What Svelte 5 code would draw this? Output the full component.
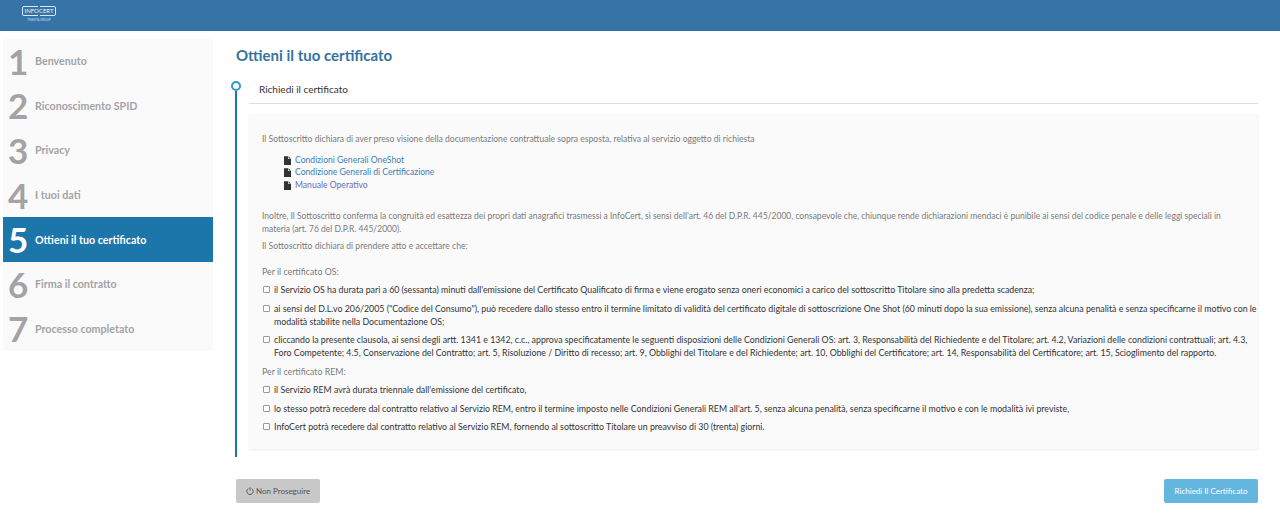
<script>
  const steps = ['Benvenuto', 'Riconoscimento SPID', 'Privacy', 'I tuoi dati', 'Ottieni il tuo certificato', 'Firma il contratto', 'Processo completato'];
  const active = 4;

  const docs = [
    { label: 'Condizioni Generali OneShot' },
    { label: 'Condizione Generali di Certificazione' },
    { label: 'Manuale Operativo', visited: true }
  ];

  const osItems = [
    'il Servizio OS ha durata pari a 60 (sessanta) minuti dall\'emissione del Certificato Qualificato di firma e viene erogato senza oneri economici a carico del sottoscritto Titolare sino alla predetta scadenza;',
    'ai sensi del D.L.vo 206/2005 ("Codice del Consumo"), può recedere dallo stesso entro il termine limitato di validità del certificato digitale di sottoscrizione One Shot (60 minuti dopo la sua emissione), senza alcuna penalità e senza specificarne il motivo con le modalità stabilite nella Documentazione OS;',
    'cliccando la presente clausola, ai sensi degli artt. 1341 e 1342, c.c., approva specificatamente le seguenti disposizioni delle Condizioni Generali OS: art. 3, Responsabilità del Richiedente e del Titolare; art. 4.2, Variazioni delle condizioni contrattuali; art. 4.3, Foro Competente; 4.5, Conservazione del Contratto; art. 5, Risoluzione / Diritto di recesso; art. 9, Obblighi del Titolare e del Richiedente; art. 10, Obblighi del Certificatore; art. 14, Responsabilità del Certificatore; art. 15, Scioglimento del rapporto.'
  ];

  const remItems = [
    'il Servizio REM avrà durata triennale dall\'emissione del certificato,',
    'lo stesso potrà recedere dal contratto relativo al Servizio REM, entro il termine imposto nelle Condizioni Generali REM all\'art. 5, senza alcuna penalità, senza specificarne il motivo e con le modalità ivi previste,',
    'InfoCert potrà recedere dal contratto relativo al Servizio REM, fornendo al sottoscritto Titolare un preavviso di 30 (trenta) giorni.'
  ];
</script>

<header class="topbar">
  <div class="logo">
    <div class="logo-box">INFOCERT</div>
    <div class="logo-sub">TINEXTA GROUP</div>
  </div>
</header>

<div class="page">
  <nav class="steps">
    {#each steps as step, i}
      <div class="step" class:active={i === active}>
        <span class="num">{i + 1}</span>
        <span class="name">{step}</span>
      </div>
    {/each}
  </nav>

  <main class="content">
    <h1>Ottieni il tuo certificato</h1>

    <section class="timeline">
      <div class="rail">
        <span class="dot"></span>
        <span class="line"></span>
      </div>
      <div class="body">
        <div class="step-title">Richiedi il certificato</div>
        <div class="card">
          <p class="light intro">Il Sottoscritto dichiara di aver preso visione della documentazione contrattuale sopra esposta, relativa al servizio oggetto di richiesta</p>
          <ul class="docs">
            {#each docs as doc}
              <li>
                <svg viewBox="0 0 8 10" width="7" height="9"><path d="M0 0h4.6v3.2H8V10H0zM5.3 0 8 2.6H5.3z" fill="#333"/></svg>
                <a href="#top" class:visited={doc.visited}>{doc.label}</a>
              </li>
            {/each}
          </ul>
          <p class="light further">Inoltre, Il Sottoscritto conferma la congruità ed esattezza dei propri dati anagrafici trasmessi a InfoCert, si sensi dell'art. 46 del D.P.R. 445/2000, consapevole che, chiunque rende dichiarazioni mendaci è punibile ai sensi del codice penale e delle leggi speciali in materia (art. 76 del D.P.R. 445/2000).</p>
          <p class="light accept">Il Sottoscritto dichiara di prendere atto e accettare che:</p>

          <p class="group first">Per il certificato OS:</p>
          {#each osItems as item}
            <label class="check"><input type="checkbox" /><span>{item}</span></label>
          {/each}

          <p class="group">Per il certificato REM:</p>
          {#each remItems as item}
            <label class="check"><input type="checkbox" /><span>{item}</span></label>
          {/each}
        </div>
      </div>
    </section>

    <div class="actions">
      <button class="btn stop">
        <svg viewBox="0 0 10 10" width="8" height="8"><path d="M3 1.9a4 4 0 1 0 4 0M5 .4v4.2" fill="none" stroke="#444" stroke-width="1"/></svg>
        Non Proseguire
      </button>
      <button class="btn go">Richiedi Il Certificato</button>
    </div>
  </main>
</div>

<style>
  :global(body) {
    background: #fff;
    font-family: Lato, "Liberation Sans", sans-serif;
  }

  .topbar {
    height: 31px;
    background: #3674a8;
    padding: 6px 0 0 22px;
    box-sizing: border-box;
  }

  .logo {
    width: 34px;
    color: #e8f0f6;
    text-align: center;
  }

  .logo-box {
    position: relative;
    border: 1px solid #dbe6ef;
    border-radius: 2px;
    font-size: 6px;
    line-height: 8px;
    height: 8px;
    white-space: nowrap;
  }

  .logo-box::before {
    content: '';
    position: absolute;
    left: 15px;
    top: -1px;
    bottom: -1px;
    width: 2px;
    background: linear-gradient(#3674a8 2px, transparent 2px, transparent 7px, #3674a8 7px);
  }

  .logo-sub {
    font-size: 3px;
    line-height: 4px;
    margin-top: 2px;
    white-space: nowrap;
    opacity: .8;
  }

  .page {
    display: flex;
    align-items: flex-start;
    padding: 8px 22px 0 3px;
  }

  .steps {
    width: 210px;
    flex-shrink: 0;
    background: #fafafa;
  }

  .step {
    height: 44.6px;
    display: flex;
    align-items: center;
    color: #a3a3a6;
    box-sizing: border-box;
    padding-left: 3px;
  }

  .step.active {
    background: #1c76a9;
    color: #fff;
  }

  .num {
    width: 29px;
    font-size: 35px;
    font-weight: 700;
    line-height: 1;
    padding-left: 2px;
    box-sizing: border-box;
  }

  .name {
    margin-top: -1px;
    font-size: 10.7px;
    font-weight: 700;
  }

  .content {
    flex: 1;
    min-width: 0;
    margin-left: 23px;
  }

  h1 {
    margin: 6px 0 0;
    font-size: 15px;
    line-height: 20px;
    font-weight: 700;
    color: #34729f;
  }

  .timeline {
    display: flex;
    margin-top: 16px;
  }

  .rail {
    width: 10px;
    margin-left: -5px;
    flex-shrink: 0;
    display: flex;
    flex-direction: column;
    align-items: center;
  }

  .dot {
    width: 10px;
    height: 10px;
    border: 2px solid #2a9bd1;
    border-radius: 50%;
    background: #fff;
    box-sizing: border-box;
  }

  .line {
    width: 2.5px;
    flex: 1;
    background: #1c76a9;
  }

  .body {
    flex: 1;
    min-width: 0;
    margin-left: 8px;
  }

  .step-title {
    height: 22px;
    line-height: 16px;
    padding-left: 10px;
    font-size: 10px;
    color: #333;
    border-bottom: 1px solid #ddd;
  }

  .card {
    margin: 10px 0 8px;
    padding: 19px 0 16px 13px;
    background: #fafafa;
    box-shadow: 0 1px 2px rgba(0, 0, 0, .08);
    font-size: 8.8px;
    line-height: 13px;
    color: #333;
  }

  p {
    margin: 0;
  }

  .light {
    color: #7a7a7a;
    font-size: 8.6px;
    padding-right: 17px;
  }

  .docs {
    list-style: none;
    margin: 8px 0 0;
    padding: 0 0 0 22px;
    font-size: 8.6px;
  }

  .docs li {
    display: flex;
    align-items: center;
    gap: 4px;
    height: 12.6px;
  }

  .docs a {
    color: #3d7fb5;
    text-decoration: none;
  }

  .docs a.visited {
    color: #6a6db5;
  }

  .further {
    margin-top: 18px;
    font-size: 8.53px;
  }

  .accept {
    margin-top: 4px;
  }

  .group {
    color: #7a7a7a;
    margin-top: 5.5px;
  }

  .group.first {
    margin-top: 12px;
  }

  .check {
    display: flex;
    margin-top: 5.5px;
  }

  .check input {
    appearance: none;
    width: 7px;
    height: 7px;
    margin: 3px 4px 0 1px;
    flex-shrink: 0;
    border: 1px solid #999;
    border-radius: 1px;
    background: #fff;
  }

  .actions {
    display: flex;
    justify-content: space-between;
    margin-top: 22px;
  }

  .btn {
    height: 24px;
    border: 0;
    border-radius: 2px;
    font-family: inherit;
    font-size: 8px;
    padding: 0;
  }

  .stop {
    width: 84px;
    background: #c8c8c8;
    color: #555;
  }

  .stop svg {
    vertical-align: -1px;
  }

  .go {
    width: 94px;
    background: #65b6df;
    color: #fff;
  }
</style>
